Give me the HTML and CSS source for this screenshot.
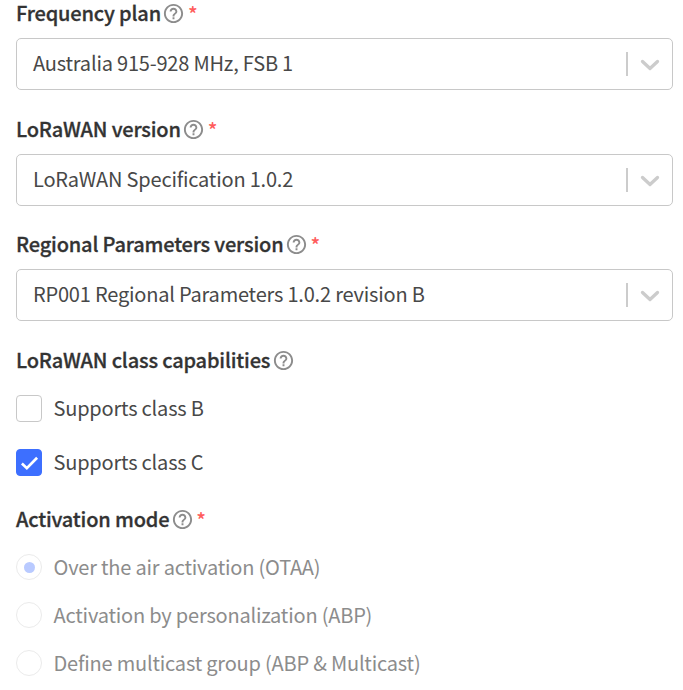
FILE: index.html
```html
<!DOCTYPE html>
<html lang="en">
<head>
<meta charset="utf-8">
<title>Device settings</title>
<link rel="stylesheet" href="styles.css">
</head>
<body>
<svg class="defs" width="0" height="0">
  <symbol id="help" viewBox="0 0 24 24"><path d="M11 18h2v-2h-2v2zm1-16C6.48 2 2 6.48 2 12s4.480 10 10 10 10-4.480 10-10S17.520 2 12 2zm0 18c-4.410 0-8-3.590-8-8s3.590-8 8-8 8 3.590 8 8-3.590 8-8 8zm0-14c-2.210 0-4 1.790-4 4h2c0-1.100.9-2 2-2s2 .9 2 2c0 2-3 1.750-3 5h2c0-2.250 3-2.500 3-5 0-2.210-1.790-4-4-4z"/></symbol>
  <symbol id="chevron" viewBox="0 0 20 14"><path d="M2.500 3.500 10 10.500 17.500 3.500" fill="none" stroke="currentColor" stroke-width="3.300" stroke-linecap="round" stroke-linejoin="round"/></symbol>
</svg>
<form class="form">
  <section class="field">
    <div class="label"><span class="title">Frequency plan</span><svg class="help"><use href="#help"/></svg><span class="required">*</span></div>
    <div class="select"><span class="value">Australia 915-928 MHz, FSB 1</span><i class="separator"></i><svg class="chevron"><use href="#chevron"/></svg></div>
  </section>
  <section class="field">
    <div class="label"><span class="title">LoRaWAN version</span><svg class="help"><use href="#help"/></svg><span class="required">*</span></div>
    <div class="select"><span class="value">LoRaWAN Specification 1.0.2</span><i class="separator"></i><svg class="chevron"><use href="#chevron"/></svg></div>
  </section>
  <section class="field">
    <div class="label"><span class="title">Regional Parameters version</span><svg class="help"><use href="#help"/></svg><span class="required">*</span></div>
    <div class="select"><span class="value">RP001 Regional Parameters 1.0.2 revision B</span><i class="separator"></i><svg class="chevron"><use href="#chevron"/></svg></div>
  </section>
  <section class="field checks">
    <div class="label"><span class="title">LoRaWAN class capabilities</span><svg class="help"><use href="#help"/></svg></div>
    <div class="option"><span class="box"></span><span class="text">Supports class B</span></div>
    <div class="option"><span class="box checked"><svg class="tick" viewBox="0 0 20 16"><path d="M2 8.500 7.200 13.500 18 2.500"/></svg></span><span class="text">Supports class C</span></div>
  </section>
  <section class="field radios">
    <div class="label"><span class="title">Activation mode</span><svg class="help"><use href="#help"/></svg><span class="required">*</span></div>
    <div class="option"><span class="radio selected"></span><span class="text">Over the air activation (OTAA)</span></div>
    <div class="option"><span class="radio"></span><span class="text">Activation by personalization (ABP)</span></div>
    <div class="option"><span class="radio"></span><span class="text">Define multicast group (ABP &amp; Multicast)</span></div>
  </section>
</form>
</body>
</html>
```

FILE: styles.css
```css
* { box-sizing: border-box; }
body {
  margin: 0;
  background: #fff;
  color: #484848;
  font: 20px/26px "Noto Sans CJK SC", "Liberation Sans", sans-serif;
  letter-spacing: -0.2px;
}
.defs { display: block; }
.form {
  display: flex;
  flex-direction: column;
  gap: 25.500px;
  padding: 0 10px 0 16px;
}
.label {
  display: flex;
  align-items: center;
  height: 28px;
  color: #333;
  font-weight: 500;
  letter-spacing: -0.17px;
  white-space: nowrap;
}
.title, .value, .text { padding-bottom: 2px; }
.title { -webkit-text-stroke: 0.3px #333; }
.help {
  width: 23px;
  height: 23px;
  margin: 0 0 1px 1.500px;
  fill: #8c8c8c;
}
.required { margin-left: 2.500px; color: #ff5c5c; }
.select {
  display: flex;
  align-items: center;
  height: 52px;
  margin-top: 10px;
  padding: 0 12px 0 16px;
  border: 1px solid #c8c8c8;
  border-radius: 5px;
}
.value { flex: 1; white-space: nowrap; }
.separator { width: 2px; height: 24px; background: #ccc; }
.chevron { width: 20px; height: 14px; margin: 2px 0 0 12px; color: #ccc; }
.option { display: flex; align-items: center; height: 28px; white-space: nowrap; }
.text { margin-left: 11.500px; }
.checks .option { margin-top: 20px; }
.checks .option + .option { margin-top: 26px; }
.box {
  display: flex;
  align-items: center;
  justify-content: center;
  width: 26px;
  height: 27px;
  border: 1px solid #c8c8c8;
  border-radius: 4px;
}
.checked { border-color: #3d6fff; background: #3d6fff; }
.tick { width: 19px; height: 16px; fill: none; stroke: #fff; stroke-width: 2.800; }
.radios { margin-top: 4px; color: #8c8c8c; }
.radios .option { margin-top: 20px; }
.radio {
  display: flex;
  align-items: center;
  justify-content: center;
  width: 26px;
  height: 26px;
  margin-bottom: 2px;
  border: 1px solid #ebebeb;
  border-radius: 50%;
}
.selected::after { content: ""; width: 11px; height: 11px; border-radius: 50%; background: #b9caff; }
```
